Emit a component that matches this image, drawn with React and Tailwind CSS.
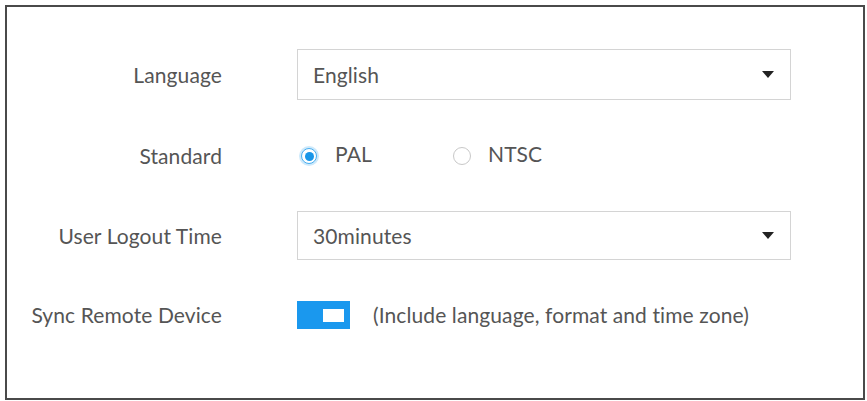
export default function App() {
  const font = { fontFamily: "Lato, 'Open Sans', sans-serif" };
  return (
    <div className="w-[867px] h-[401px] bg-white pl-[5px] pt-[5px]" style={font}>
      <div className="w-[860px] h-[395px] border-2 border-[#4a4a4a] pt-[42px] text-[21px] tracking-[0.1px] text-[#555]">
        <div className="flex flex-col">
          {/* Language */}
          <div className="flex items-center h-[51px]">
            <div className="w-[215px] text-right whitespace-nowrap">Language</div>
            <div className="ml-[75px] w-[494px] h-[51px] border border-[#d4d4d4] flex items-center justify-between pl-[15px] pr-[16px]">
              <span>English</span>
              <svg width="12" height="7" viewBox="0 0 12 7"><path d="M0 0H12L6 7Z" fill="#222" /></svg>
            </div>
          </div>
          {/* Standard */}
          <div className="flex items-center h-[30px] mt-[41px]">
            <div className="w-[215px] text-right whitespace-nowrap">Standard</div>
            <div className="ml-[77px] flex items-center">
              <span className="w-[20px] h-[20px] rounded-full bg-[#cde9fb] flex items-center justify-center">
                <span className="w-[16px] h-[16px] rounded-full border border-[#48aef0] bg-white flex items-center justify-center">
                  <span className="w-[9px] h-[9px] rounded-full bg-[#1996e8]" />
                </span>
              </span>
              <span className="ml-[16px] -mt-[4px] w-[118px]">PAL</span>
              <span className="w-[18px] h-[18px] rounded-full border border-[#c8c8c8] bg-white" />
              <span className="ml-[17px] -mt-[4px]">NTSC</span>
            </div>
          </div>
          {/* User Logout Time */}
          <div className="flex items-center h-[49px] mt-[40px]">
            <div className="w-[215px] text-right whitespace-nowrap">User Logout Time</div>
            <div className="ml-[75px] w-[494px] h-[49px] border border-[#d4d4d4] flex items-center justify-between pl-[15px] pr-[16px]">
              <span>30minutes</span>
              <svg width="12" height="7" viewBox="0 0 12 7"><path d="M0 0H12L6 7Z" fill="#222" /></svg>
            </div>
          </div>
          {/* Sync Remote Device */}
          <div className="flex items-center h-[28px] mt-[41px]">
            <div className="w-[215px] text-right whitespace-nowrap">Sync Remote Device</div>
            <div className="ml-[75px] w-[53px] h-[28px] bg-[#1a98ee] flex items-center justify-end pr-[6px]">
              <span className="w-[21px] h-[13px] bg-white" />
            </div>
            <span className="ml-[23px] whitespace-nowrap">(Include language, format and time zone)</span>
          </div>
        </div>
      </div>
    </div>
  );
}
